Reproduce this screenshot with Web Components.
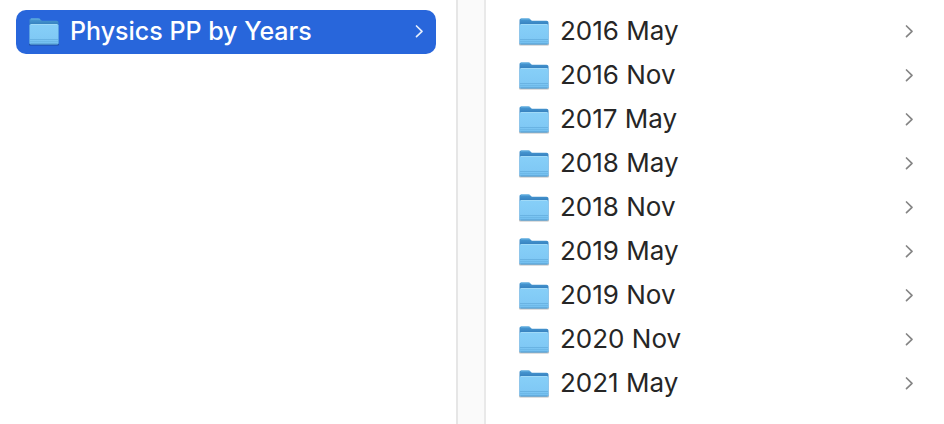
<!DOCTYPE html>
<html lang="en">
<head>
<meta charset="utf-8">
<meta name="viewport" content="width=device-width, initial-scale=1">
<title>Physics PP by Years</title>
<style>
html, body { height: 100%; }
body { margin: 0; background: #fff; color: #262626; font-family: Inter, "Liberation Sans", sans-serif; overflow: hidden; }
</style>
</head>
<body>
<column-browser>
  <folder-column slot="parent" aria-label="Folders">
    <folder-row selected>Physics PP by Years</folder-row>
  </folder-column>
  <folder-column slot="child" aria-label="Physics PP by Years">
    <folder-row>2016 May</folder-row>
    <folder-row>2016 Nov</folder-row>
    <folder-row>2017 May</folder-row>
    <folder-row>2018 May</folder-row>
    <folder-row>2018 Nov</folder-row>
    <folder-row>2019 May</folder-row>
    <folder-row>2019 Nov</folder-row>
    <folder-row>2020 Nov</folder-row>
    <folder-row>2021 May</folder-row>
  </folder-column>
</column-browser>

<template id="browser-template">
  <style>
    :host { display: grid; grid-template-columns: minmax(0, 1fr) 28px minmax(0, 1fr); min-height: 100%; }
    .gutter { box-sizing: border-box; background: #fafafa; border-right: 2px solid #e9e9e9; }
    ::slotted([slot="parent"]) { padding: 10px 20px 10px 16px; border-right: 2px solid #e6e6e6; }
    ::slotted([slot="child"]) { padding: 10px 18px 10px 20px; }
  </style>
  <slot name="parent"></slot>
  <div class="gutter"></div>
  <slot name="child"></slot>
</template>

<template id="column-template">
  <style>
    :host { display: flex; flex-direction: column; box-sizing: border-box; }
  </style>
  <slot></slot>
</template>

<template id="row-template">
  <style>
    :host { display: block; }
    button {
      display: flex; align-items: center; box-sizing: border-box;
      width: 100%; height: 44px; margin: 0; padding: 0 12px;
      border: 0; border-radius: 10px; background: none; color: inherit;
      font: 400 26px/32px Inter, "Liberation Sans", sans-serif; text-align: left;
    }
    :host([selected]) button { background: #2866db; color: #fff; font-size: 25px; font-weight: 500; }
    .label { flex: 1; min-width: 0; margin-left: 10px; padding-bottom: 2px; white-space: nowrap; overflow: hidden; text-overflow: ellipsis; }
    folder-icon, row-chevron { flex: none; }
    row-chevron { color: #858585; }
    :host([selected]) row-chevron { color: #e6eefc; }
  </style>
  <button type="button">
    <folder-icon></folder-icon>
    <span class="label"><slot></slot></span>
    <row-chevron></row-chevron>
  </button>
</template>

<template id="folder-template">
  <style>
    :host { display: block; width: 32px; height: 32px; }
    svg { display: block; overflow: visible; }
  </style>
  <svg width="32" height="32" viewBox="0 0 32 32" aria-hidden="true">
    <defs>
      <linearGradient id="back" x1="0" y1="0" x2="0" y2="1">
        <stop offset="0" stop-color="#4a9bd5"/>
        <stop offset=".25" stop-color="#357fbd"/>
        <stop offset="1" stop-color="#3b86c3"/>
      </linearGradient>
      <linearGradient id="front" x1="0" y1="0" x2="0" y2="1">
        <stop offset="0" stop-color="#87cff8"/>
        <stop offset=".7" stop-color="#80c9f5"/>
        <stop offset="1" stop-color="#70bdee"/>
      </linearGradient>
    </defs>
    <path d="M2 28.500h28" stroke="#000" stroke-opacity=".26" stroke-width="2" stroke-linecap="round"/>
    <path d="M1.500 28V4Q1.500 2.500 3 2.500h7.500q1 0 1.700.7l1 1q.7.600 1.800.600h13.500q2 0 2 1.700V28z" fill="url(#back)"/>
    <path d="M3 3h7.500q1 0 1.600.6" fill="none" stroke="#67b2e2" stroke-width="1"/>
    <path d="M1.500 9.500Q1.500 8 3 8h26q1.500 0 1.500 1.500V27q0 1.500-1.500 1.500H3q-1.500 0-1.500-1.500z" fill="url(#front)"/>
    <path d="M3 8.500h26" stroke="#a0daf8" stroke-width="1"/>
    <path d="M2 23.500h28" stroke="#559fd2" stroke-opacity=".5" stroke-width="1"/>
    <path d="M2 25.500h28" stroke="#559fd2" stroke-opacity=".3" stroke-width="1"/>
    <path d="M2.500 28h27" stroke="#4f94c5" stroke-opacity=".8" stroke-width="1"/>
  </svg>
</template>

<template id="chevron-template">
  <style>
    :host { display: block; width: 10px; height: 16px; }
    svg { display: block; }
  </style>
  <svg width="10" height="16" viewBox="0 0 10 16" fill="none" stroke="currentColor" stroke-width="1.700" stroke-linecap="round" stroke-linejoin="round" aria-hidden="true">
    <path d="M2.500 2 8 7.300 2.500 12.600"/>
  </svg>
</template>

<script>
const define = (name, templateId, role) => {
  customElements.define(name, class extends HTMLElement {
    constructor() {
      super();
      this.attachShadow({ mode: "open" })
        .append(document.getElementById(templateId).content.cloneNode(true));
    }
    connectedCallback() {
      if (role) this.setAttribute("role", role);
      if (this.hasAttribute("selected")) {
        this.shadowRoot.querySelector("button").setAttribute("aria-pressed", "true");
      }
    }
  });
};
define("folder-icon", "folder-template");
define("row-chevron", "chevron-template");
define("folder-row", "row-template", "listitem");
define("folder-column", "column-template", "list");
define("column-browser", "browser-template");
</script>
</body>
</html>
